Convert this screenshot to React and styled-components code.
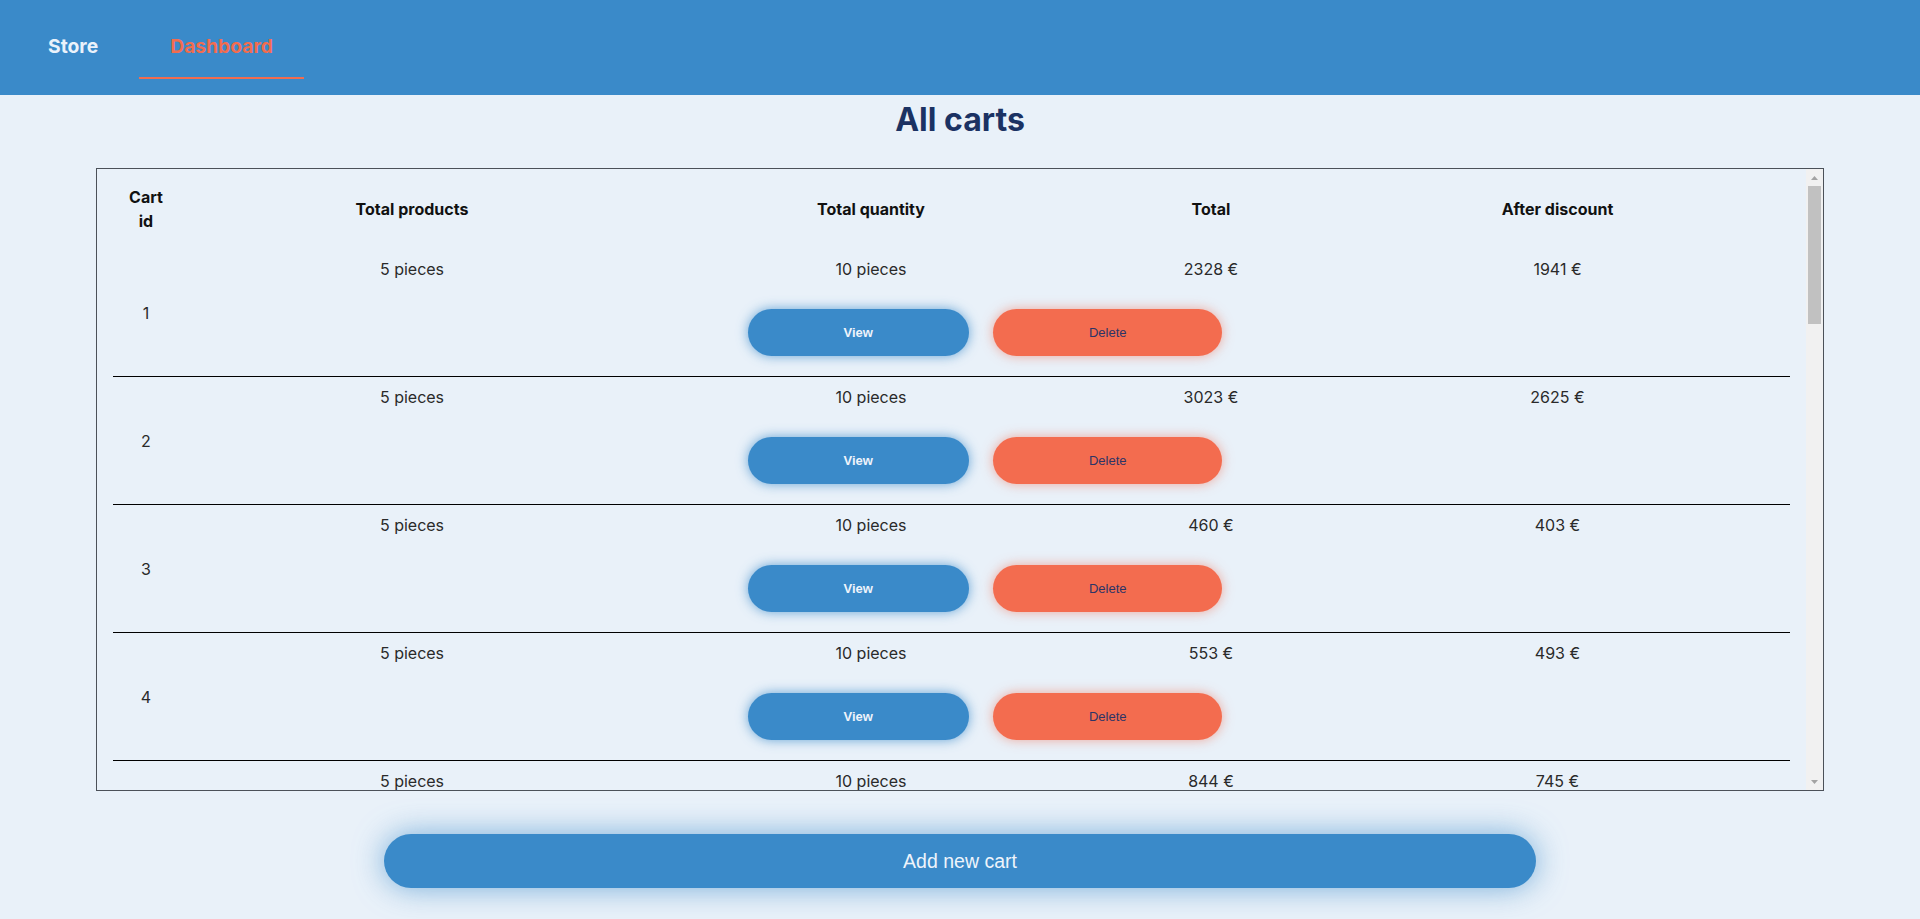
import React from 'react';
import styled, { createGlobalStyle } from 'styled-components';

const GlobalStyle = createGlobalStyle`
  * { box-sizing: border-box; }
  html, body { margin: 0; padding: 0; }
  body {
    background: #e9f1f9;
    font-family: Inter, "Noto Sans", sans-serif;
    color: #222;
  }
`;

const Page = styled.div`
  min-height: 100vh;
  overflow: hidden;
`;

const NavBar = styled.nav`
  height: 95px;
  background: #3a8ac9;
  display: flex;
  align-items: flex-start;
  padding-left: 17px;
  gap: 10px;
`;

const NavLink = styled.a`
  padding: 31px 31px 16px;
  font-size: 19.3px;
  line-height: 30px;
  font-weight: 700;
  text-decoration: none;
  cursor: pointer;
  color: ${(p) => (p.$active ? '#f26c4f' : '#eaf2fb')};
  border-bottom: 2px solid ${(p) => (p.$active ? '#f26c4f' : 'transparent')};
`;

const Title = styled.h1`
  margin: 6px 0 29px;
  text-align: center;
  font-size: 32px;
  line-height: 38px;
  font-weight: 700;
  color: #1b3263;
`;

const Frame = styled.div`
  width: 90%;
  margin: 0 auto;
  height: 623px;
  border: 1px solid #4b5159;
  display: flex;
`;

const Viewport = styled.div`
  flex: 1;
  min-width: 0;
  overflow-y: auto;
  scrollbar-width: none;
  padding: 16px 16px 0;
  &::-webkit-scrollbar { display: none; }
`;

const ScrollTrack = styled.div`
  width: 17px;
  flex: none;
  background: #f1f1f1;
  display: flex;
  flex-direction: column;
`;

const ScrollArrow = styled.div`
  height: 17px;
  display: flex;
  align-items: center;
  justify-content: center;
  margin-top: ${(p) => (p.$down ? 'auto' : '0')};
`;

const ScrollThumb = styled.div`
  height: 138px;
  margin: 0 2px;
  background: #c1c1c1;
`;

const COLUMNS = '66px 466px 452px 228px 1fr';

const HeaderRow = styled.div`
  display: grid;
  grid-template-columns: ${COLUMNS};
  align-items: center;
  padding: 0 0 16px;
`;

const HeadCell = styled.div`
  text-align: center;
  font-size: 16px;
  line-height: 24px;
  font-weight: 700;
  color: #111;
  padding: 0 ${(p) => (p.$narrow ? '14px' : '0')};
`;

const CartRow = styled.div`
  display: grid;
  grid-template-columns: ${COLUMNS};
  border-bottom: 1px solid #000;
`;

const IdCell = styled.div`
  grid-column: 1;
  grid-row: 1 / span 2;
  align-self: center;
  text-align: center;
  font-size: 16px;
  line-height: 24px;
  color: #2a2a2a;
`;

const Cell = styled.div`
  grid-row: 1;
  padding-top: 8px;
  text-align: center;
  font-size: 16px;
  line-height: 24px;
  color: #2a2a2a;
`;

const Actions = styled.div`
  grid-column: 3 / span 2;
  grid-row: 2;
  display: flex;
  justify-content: center;
  gap: 24px;
  padding: 28px 0 20px;
`;

const ActionButton = styled.button`
  padding: 16px 96px;
  border: none;
  border-radius: 24px;
  font-family: "Liberation Sans", Arial, sans-serif;
  font-size: 13px;
  line-height: 15px;
  cursor: pointer;
  background: ${(p) => (p.$danger ? '#f36c4f' : '#3a8ac9')};
  color: ${(p) => (p.$danger ? '#2d3466' : '#eef4fb')};
  font-weight: ${(p) => (p.$danger ? 400 : 700)};
  box-shadow: 0 0 12px ${(p) => (p.$danger ? 'rgba(243, 108, 79, 0.55)' : 'rgba(58, 138, 201, 0.75)')};
`;

const AddButton = styled.button`
  display: block;
  width: 60%;
  margin: 43px auto 0;
  padding: 16px;
  border: none;
  border-radius: 27px;
  background: #3a8ac9;
  color: #eef4fb;
  font-family: "Liberation Sans", Arial, sans-serif;
  font-size: 19.5px;
  line-height: 22px;
  cursor: pointer;
  box-shadow: 0 0 30px rgba(58, 138, 201, 0.65);
`;

const Triangle = ({ down }) => (
  <svg width="7" height="4" viewBox="0 0 7 4">
    <polygon points={down ? '0,0 7,0 3.5,4' : '3.5,0 7,4 0,4'} fill="#a3a3a3" />
  </svg>
);

const carts = [
  [1, 2328, 1941],
  [2, 3023, 2625],
  [3, 460, 403],
  [4, 553, 493],
  [5, 844, 745],
  [6, 4288, 3781],
  [7, 1742, 1512],
  [8, 962, 840],
  [9, 2180, 1905],
  [10, 1371, 1214],
  [11, 3290, 2871],
  [12, 705, 621],
  [13, 1866, 1630],
  [14, 512, 458],
  [15, 2594, 2262],
  [16, 1133, 996],
  [17, 3841, 3370],
  [18, 658, 582],
  [19, 1490, 1306],
  [20, 2735, 2401],
];

export default function App() {
  return (
    <Page>
      <GlobalStyle />
      <NavBar>
        <NavLink>Store</NavLink>
        <NavLink $active>Dashboard</NavLink>
      </NavBar>
      <Title>All carts</Title>
      <Frame>
        <Viewport>
          <HeaderRow>
            <HeadCell $narrow>Cart id</HeadCell>
            <HeadCell>Total products</HeadCell>
            <HeadCell>Total quantity</HeadCell>
            <HeadCell>Total</HeadCell>
            <HeadCell>After discount</HeadCell>
          </HeaderRow>
          {carts.map(([id, total, after]) => (
            <CartRow key={id}>
              <IdCell>{id}</IdCell>
              <Cell>5 pieces</Cell>
              <Cell>10 pieces</Cell>
              <Cell>{total} €</Cell>
              <Cell>{after} €</Cell>
              <Actions>
                <ActionButton>View</ActionButton>
                <ActionButton $danger>Delete</ActionButton>
              </Actions>
            </CartRow>
          ))}
        </Viewport>
        <ScrollTrack>
          <ScrollArrow>
            <Triangle />
          </ScrollArrow>
          <ScrollThumb />
          <ScrollArrow $down>
            <Triangle down />
          </ScrollArrow>
        </ScrollTrack>
      </Frame>
      <AddButton>Add new cart</AddButton>
    </Page>
  );
}
